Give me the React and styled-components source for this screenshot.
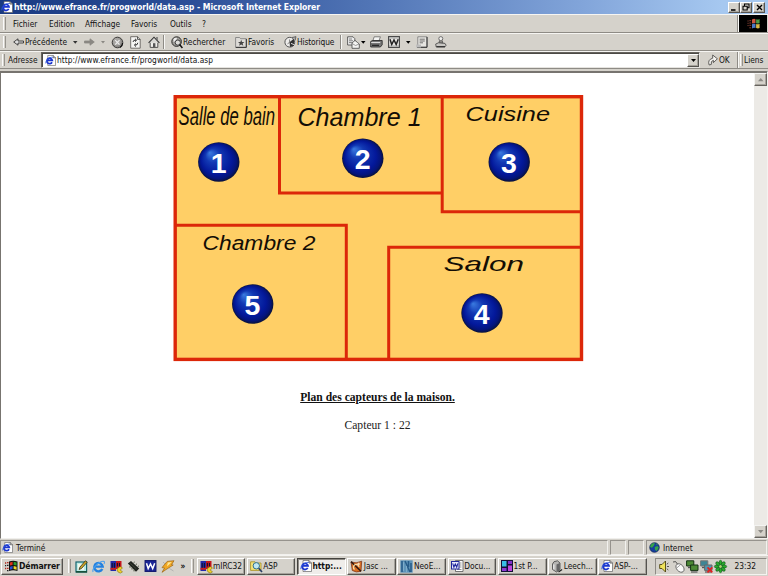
import React from 'react';
import styled, { createGlobalStyle, css } from 'styled-components';

const face = '#d5d2cb';
const uiFont = '"DejaVu Sans Condensed", "DejaVu Sans", sans-serif';

const GlobalStyle = createGlobalStyle`
  * { box-sizing: border-box; }
  body { margin: 0; overflow: hidden; background: #fff; }
`;

const Screen = styled.div`
  width: 768px;
  height: 576px;
  display: flex;
  flex-direction: column;
  background: ${face};
  font: 8.3px/12px ${uiFont};
  color: #111;
  overflow: hidden;
`;

const Cell = styled.div`
  flex: 0 0 ${(p) => p.$w}px;
  width: ${(p) => p.$w}px;
  display: flex;
  align-items: center;
`;

const Label = styled.span`
  white-space: pre;
  letter-spacing: ${(p) => p.$ls || 0}px;
  font-weight: ${(p) => (p.$bold ? 'bold' : 'normal')};
`;

const Svg = styled.svg`
  display: block;
  flex: none;
  overflow: visible;
`;

const TitleBar = styled.header`
  height: 14px;
  flex: none;
  display: flex;
  align-items: center;
  padding-left: 1px;
  background: linear-gradient(90deg, #193a82 0%, #2c4f98 25%, #5478b8 50%, #82a5da 76%, #a6c8f0 94%);
  color: #fff;
  font-size: 8.6px;
`;

const WindowButtons = styled.div`
  margin-left: auto;
  display: flex;
  padding-right: 3px;
`;

const raised = css`
  background: ${face};
  border: 1px solid;
  border-color: #fff #55534f #55534f #fff;
  box-shadow: inset -1px -1px 0 #a5a29b;
`;

const WindowButton = styled.div`
  ${raised}
  width: 12px;
  height: 11px;
  margin-left: ${(p) => p.$gap || 0}px;
  display: flex;
  align-items: center;
  justify-content: center;
`;

const Bar = styled.div`
  height: ${(p) => p.$h}px;
  flex: none;
  display: flex;
  align-items: stretch;
  border-top: 1px solid #f6f5f2;
  border-bottom: 1px solid #8e8b85;
`;

const Grip = styled.div`
  width: 3px;
  flex: none;
  align-self: stretch;
  margin: 2px ${(p) => p.$after}px 2px ${(p) => p.$before}px;
  border-left: 1px solid #fafafa;
  border-right: 1px solid #96938d;
`;

const Separator = styled.div`
  width: 2px;
  flex: none;
  margin: ${(p) => (p.$full ? '0' : '1px')} 0;
  border-left: 1px solid #8e8b85;
  border-right: 1px solid #f8f8f6;
`;

const Throbber = styled.div`
  width: 29px;
  margin: 0 1px 0 0;
  background: #000;
  display: flex;
  align-items: center;
  justify-content: center;
`;

const AddressField = styled.div`
  width: 659px;
  flex: none;
  display: flex;
  align-items: center;
  background: #fff;
  border: 1px solid;
  border-color: #66635e #e5e3df #e5e3df #66635e;
  box-shadow: inset 1px 1px 0 #4b4945;
  padding-left: 3px;
`;

const DropButton = styled.div`
  ${raised}
  margin-left: auto;
  width: 12px;
  height: 13px;
  display: flex;
  align-items: center;
  justify-content: center;
`;

const Viewport = styled.main`
  flex: 1;
  margin-top: 2px;
  display: flex;
  background: #fff;
  border: 1px solid;
  border-color: #77746f #f4f3f0 #f0efec #77746f;
  box-shadow: inset 0 1px 0 #77746f;
  padding-top: 1px;
`;

const Page = styled.div`
  flex: 1;
  display: flex;
  flex-direction: column;
  align-items: center;
  padding-top: 21px;
  font-family: "Liberation Serif", serif;
  font-size: 12px;
  line-height: 14px;
`;

const Plan = styled.figure`
  margin: 0 0 0 2px;
`;

const Caption = styled.p`
  margin: 29px 0 0;
  font-size: 11.6px;
  font-weight: bold;
  text-decoration: underline;
`;

const Reading = styled.p`
  margin: 14px 0 0;
  font-size: 11.6px;
  color: #222;
`;

const ScrollBar = styled.div`
  width: 13px;
  flex: none;
  display: flex;
  flex-direction: column;
  justify-content: space-between;
  background: #eceae6;
`;

const ScrollButton = styled.div`
  ${raised}
  height: 13px;
  border-color: #f4f4f2 #66635e #66635e #f4f4f2;
  display: flex;
  align-items: center;
  justify-content: center;
`;

const StatusBar = styled.footer`
  height: 15px;
  flex: none;
  display: flex;
  margin-top: 1px;
  gap: 2px;
  padding-right: 1px;
`;

const Pane = styled.div`
  flex: ${(p) => (p.$w ? `0 0 ${p.$w}px` : '1')};
  display: flex;
  align-items: center;
  padding-left: ${(p) => p.$pad || 0}px;
  gap: 3px;
  border: 1px solid;
  border-color: #96938d #f2f1ee #f2f1ee #96938d;
`;

const TaskBar = styled.nav`
  height: 21px;
  flex: none;
  display: flex;
  align-items: center;
  padding: 1px 1px 1px 1px;
  border-top: 1px solid #f5f4f1;
`;

const StartButton = styled.div`
  ${raised}
  width: 62px;
  height: 17px;
  flex: none;
  display: flex;
  align-items: center;
  padding-left: 3px;
  gap: 1px;
  font-size: 8.6px;
`;

const TaskButton = styled.div`
  ${raised}
  width: 48.6px;
  height: 17px;
  flex: none;
  margin-right: 1.65px;
  display: flex;
  align-items: center;
  padding-left: 2px;
  gap: 0.5px;
  overflow: hidden;
  ${(p) =>
    p.$active &&
    css`
      background: #efedea;
      border-color: #44423e #fff #fff #44423e;
      box-shadow: inset 1px 1px 0 #8e8b85;
    `}
`;

const Tray = styled.div`
  flex: 1;
  height: 17px;
  margin-left: 6px;
  display: flex;
  align-items: center;
  padding-left: 3px;
  border: 1px solid;
  border-color: #8e8b85 #f4f3f0 #f4f3f0 #8e8b85;
`;

/* ---------- icons ---------- */

const Arrow = ({ up, color = '#000', s = 5 }) => (
  <Svg width={s} height={s * 0.6} viewBox="0 0 10 6">
    <path d={up ? 'M0 6L5 0L10 6Z' : 'M0 0H10L5 6Z'} fill={color} />
  </Svg>
);

const IePage = ({ size = 12 }) => (
  <Svg width={size} height={size} viewBox="0 0 12 12">
    <path d="M3 .5H9L11.5 3V11.5H3Z" fill="#fff" stroke="#666" strokeWidth=".7" />
    <path d="M9 .5V3H11.5" fill="none" stroke="#444" strokeWidth=".8" />
    <path d="M7.7 7.9A3 3 0 1 1 8 5.9H3" fill="none" stroke="#1b36cf" strokeWidth="1.8" />
    <path d="M.7 9.2Q.2 6.5 4 3.6Q7 1.8 8.8 2.5" fill="none" stroke="#2b58dd" strokeWidth=".8" />
  </Svg>
);

const IeLogo = () => (
  <Svg width="13" height="13" viewBox="0 0 13 13">
    <path d="M10.3 9A4.2 4.2 0 1 1 10.7 6.6H3.2" fill="none" stroke="#2381df" strokeWidth="2.4" />
    <path d="M1 12Q0 9 5 4.3Q10 .2 12.2 1.5Q12.9 2.2 12 4" fill="none" stroke="#4a9fee" strokeWidth="1.1" />
  </Svg>
);

const Flag = ({ w = 13, h = 12 }) => (
  <Svg width={w} height={h} viewBox="0 0 13 12">
    <path d="M5 1.5Q7 .3 8.5 1.2V5.2Q7 4.5 5 5.5Z" fill="#c9553e" />
    <path d="M9.1 1.3Q11 2 12.6 1V5Q11 6 9.1 5.2Z" fill="#4c9a45" />
    <path d="M5 6.2Q7 5 8.5 6V10Q7 9.4 5 10.4Z" fill="#4a78c4" />
    <path d="M9.1 6.1Q11 6.7 12.6 5.8V10Q11 10.8 9.1 10Z" fill="#d9b843" />
    <path d="M.5 3H1.6M2.4 2.7H4.2M.5 5.3H1.6M2.4 5H4.2M.5 7.6H1.6M2.4 7.3H4.2M2.4 9.8H4.2" stroke="#8d4436" strokeWidth="1" />
  </Svg>
);

const StartFlag = () => (
  <Svg width="13" height="12" viewBox="0 0 13 12">
    <path d="M4 1.5Q8-.2 12.5 1.5V11Q8 9.5 4 11Z" fill="#111" />
    <path d="M5 2.5L7.6 1.8V5L5 5.5Z" fill="#e3311c" />
    <path d="M8.6 1.8L11.6 2.6V5.6L8.6 5Z" fill="#2b9c2f" />
    <path d="M5 6.7L7.6 6V9L5 9.7Z" fill="#2d50d6" />
    <path d="M8.6 6.1L11.6 6.8V9.8L8.6 9.1Z" fill="#f0d62b" />
    <path d="M0 3H1.2M2 2.7H3.5M0 8.5H1.2M2 8.3H3.5" stroke="#b3271b" strokeWidth="1.3" />
    <path d="M0 5.7H1.2M2 5.4H3.5M2 10.6H3.5" stroke="#222" strokeWidth="1.3" />
  </Svg>
);

const BackArrow = ({ forward }) => (
  <Svg width="11" height="8" viewBox="0 0 11 8">
    <path
      d={forward ? 'M.5 3H6V.8L10.3 4L6 7.2V5H.5Z' : 'M10.5 3H5V.8L.7 4L5 7.2V5H10.5Z'}
      fill={forward ? '#8a8883' : '#ddd'}
      stroke={forward ? '#8a8883' : '#222'}
      strokeWidth=".8"
    />
  </Svg>
);

const StopIcon = () => (
  <Svg width="13" height="13" viewBox="0 0 13 13">
    <circle cx="6.5" cy="6.5" r="5.3" fill="#8d8b88" stroke="#3c3b39" />
    <circle cx="5.9" cy="5.7" r="3.8" fill="#a9a7a4" />
    <path d="M4.2 4.2L8.5 8.6M8.5 4.2L4.2 8.6" stroke="#eee" strokeWidth="1.2" />
    <path d="M9 11.4A5.2 5.2 0 0 0 11.6 7" fill="none" stroke="#111" strokeWidth="1.2" />
  </Svg>
);

const RefreshIcon = () => (
  <Svg width="11" height="13" viewBox="0 0 11 13">
    <path d="M.7 .7H7.5L10.2 3.4V12.2H.7Z" fill="#f5f5f3" stroke="#55534f" strokeWidth=".8" />
    <path d="M7.5 .7V3.4H10.2" fill="none" stroke="#333" strokeWidth=".8" />
    <path d="M3 6Q3.2 3.7 6 4.2M5 2.8L6.6 4.2L5 5.6M7.8 6.8Q7.7 9.4 5 9M6 7.6L4.3 9L6 10.6" fill="none" stroke="#333" />
  </Svg>
);

const HomeIcon = () => (
  <Svg width="12" height="12" viewBox="0 0 12 12">
    <path d="M2.2 6V11.4H9.8V6" fill="#f0efec" stroke="#444" strokeWidth=".9" />
    <path d="M.6 6.8L6 1.2L11.4 6.8" fill="#d9d8d5" stroke="#333" strokeWidth="1.1" />
    <path d="M8.3 1V3.4L9.7 4.8V1Z" fill="#666" />
    <rect x="5" y="7.2" width="2.4" height="4.2" fill="#555" />
  </Svg>
);

const SearchIcon = () => (
  <Svg width="12" height="13" viewBox="0 0 12 13">
    <circle cx="5.6" cy="5.6" r="4.8" fill="#9d9b97" stroke="#2f2e2c" />
    <path d="M2.5 3Q4 1.4 6 2L5 4.6L2.6 6Z" fill="#eee" />
    <circle cx="6.8" cy="6.6" r="2.6" fill="#dddcd9" stroke="#333" strokeWidth=".9" />
    <path d="M8.6 8.6L11.4 12" stroke="#111" strokeWidth="1.5" />
  </Svg>
);

const FavIcon = () => (
  <Svg width="12" height="12" viewBox="0 0 12 12">
    <path d="M.6 1.5H4.6L5.6 2.7H11.3V11.3H.6Z" fill="#dddbd7" stroke="#777" strokeWidth=".8" />
    <path d="M11.3 3V11.4H.8" fill="none" stroke="#333" strokeWidth="1" />
    <path d="M6.2 3.8L7 6L9.4 6L7.6 7.4L8.3 9.8L6.2 8.4L4.1 9.8L4.8 7.4L3 6L5.4 6Z" fill="#444" />
  </Svg>
);

const HistoryIcon = () => (
  <Svg width="13" height="12" viewBox="0 0 13 12">
    <circle cx="5.8" cy="6.2" r="4.9" fill="#edecea" stroke="#555" />
    <path d="M5.5 6.2L10 2.4V9.8L6 11Z" fill="#333" />
    <path d="M8 1.5L12 .6L11.2 4.4" fill="#aaa" stroke="#333" strokeWidth=".6" />
    <path d="M5.6 3.4V6.4L3.5 7.8" fill="none" stroke="#666" strokeWidth=".8" />
    <path d="M7 7.4L10.5 8.8" stroke="#ddd" strokeWidth="1" />
  </Svg>
);

const EditIcon = () => (
  <Svg width="13" height="13" viewBox="0 0 13 13">
    <path d="M.6 .8H6L7.8 2.6V9H.6Z" fill="#eee" stroke="#444" strokeWidth=".8" />
    <path d="M2 3H5M2 4.8H6M2 6.6H5" stroke="#666" strokeWidth=".8" />
    <path d="M5 7L8 4.4L10.4 6.4L12.3 8V12.3H5Z" fill="#f4f4f2" stroke="#444" strokeWidth=".8" />
    <path d="M5 7.5L8.6 9.5L12 8" fill="none" stroke="#777" strokeWidth=".7" />
  </Svg>
);

const PrintIcon = () => (
  <Svg width="13" height="12" viewBox="0 0 13 12">
    <path d="M4.2 .8H10.4L8.9 5H2.8Z" fill="#f4f4f2" stroke="#555" strokeWidth=".7" />
    <path d="M.7 5.5L2.4 4.5H12.2V8.8L10.4 11H.7Z" fill="#777" stroke="#222" strokeWidth=".8" />
    <path d="M1.2 6.5H10.2" stroke="#ddd" />
    <path d="M2 9.3H9" stroke="#222" strokeWidth="1.2" />
  </Svg>
);

const WordIcon = ({ blue, w = 12 }) => (
  <Svg width={w} height="12" viewBox="0 0 12 12">
    <rect x=".6" y=".6" width="10.8" height="10.8" fill={blue ? '#1b2697' : '#e9e8e5'} stroke={blue ? '#10166d' : '#444'} strokeWidth="1.1" />
    <path d="M2 3.2L3.7 8.6L6 4L8.2 8.6L10.2 3.2" fill="none" stroke={blue ? '#fff' : '#222'} strokeWidth="1.5" />
    {!blue && <path d="M1 2H11M1 10H11" stroke="#888" strokeWidth=".7" />}
  </Svg>
);

const WordDoc = () => (
  <Svg width="13" height="12" viewBox="0 0 13 12">
    <path d="M4.5 .5H12V11.5H4.5Z" fill="#fff" stroke="#555" strokeWidth=".8" />
    <path d="M7 3H10.5M8 5H10.5M8 7H10.5M6 9.5H10.5" stroke="#777" strokeWidth=".8" />
    <rect x=".5" y="1.5" width="7.5" height="7.5" fill="#e9eafc" stroke="#22289d" />
    <path d="M1.7 3.3L2.9 7.1L4.3 4L5.7 7.1L6.9 3.3" fill="none" stroke="#22289d" strokeWidth="1.1" />
  </Svg>
);

const DiscussIcon = () => (
  <Svg width="12" height="12" viewBox="0 0 12 12">
    <path d="M1.8 .8H11V11.2H1.8Z" fill="#e6e5e1" stroke="#777" strokeWidth=".8" />
    <path d="M11 1V11.3H1" fill="none" stroke="#333" />
    <path d="M3.6 3.2H8.8M3.6 5H8.8M3.6 6.8H7" stroke="#555" strokeWidth=".8" />
    <path d="M.2 8.5H5V11.5H.2Z" fill="#bbb" />
  </Svg>
);

const MessengerIcon = () => (
  <Svg width="12" height="12" viewBox="0 0 12 12">
    <circle cx="5.8" cy="2.6" r="2" fill="#efeeec" stroke="#555" strokeWidth=".8" />
    <path d="M4.6 4.5L3.8 7.4H8L7.2 4.5" fill="#8b8985" stroke="#444" strokeWidth=".7" />
    <path d="M.7 8L3.5 6.8L10 7.4L11.2 9.5L9.5 11H1.2Z" fill="#c9c7c3" stroke="#444" strokeWidth=".8" />
    <path d="M1.5 10.7H10" stroke="#222" />
  </Svg>
);

const GoIcon = () => (
  <Svg width="10" height="12" viewBox="0 0 10 12">
    <path d="M1.2 11Q-.8 5.8 4.7 4.2V1L9.4 4.8L5.4 8.6V6.3Q2.4 7 3.3 10.4Z" fill="#f3f2ef" stroke="#3f3e3b" strokeWidth=".8" />
  </Svg>
);

const Globe = () => (
  <Svg width="11" height="11" viewBox="0 0 11 11">
    <circle cx="5.5" cy="5.5" r="4.8" fill="#163f9f" stroke="#10214d" strokeWidth=".7" />
    <path d="M2 2.4Q4.4 .8 5.8 1.2L5 3.6L3 5.8L1 5ZM5.7 5L8.4 4L9.8 5.6L7.8 9L6 8ZM7.2 1.2L9 2.7L7.5 3Z" fill="#35a44a" />
  </Svg>
);

const DesktopIcon = () => (
  <Svg width="13" height="13" viewBox="0 0 13 13">
    <rect x="1" y="2" width="10.6" height="10" fill="#bcece6" stroke="#176670" strokeWidth="1.2" />
    <path d="M3 4H9V10H3Z" fill="#f5f7ea" />
    <path d="M4 9.5L5 7L10.4 .8L12.2 2.2L6.4 8.6Z" fill="#d3a625" stroke="#28321f" strokeWidth=".8" />
    <path d="M1 11.8H12" stroke="#154e36" strokeWidth="1.5" />
  </Svg>
);

const MircIcon = () => (
  <Svg width="13" height="13" viewBox="0 0 13 13">
    <path d="M.5 1H6V11H.5Z" fill="#2229a9" />
    <path d="M6 1H11.5V9H6Z" fill="#c6161c" />
    <path d="M2.2 3V8M4.4 3V8M7.4 3V6.5M9.5 3V6.5" stroke="#16102d" strokeWidth="1.1" />
    <path d="M.5 8.8H6" stroke="#ca2022" strokeWidth="2" />
    <path d="M12.5 8A3 3 0 1 0 12.5 11.8L10.2 10Z" fill="#f2d32c" stroke="#6b5b08" strokeWidth=".5" />
  </Svg>
);

const ChipIcon = () => (
  <Svg width="13" height="13" viewBox="0 0 13 13">
    <path d="M.8 3.6L4 1L12.2 8.4L9 11.7Z" fill="#1e211c" />
    <path d="M3 6V7.8M5 7.8V9.6M7 9.6V11.4M6.6 2.4L7.8 2M8.8 4.4L10 4M10.8 6.4L12 6" stroke="#58604d" strokeWidth="1" />
    <path d="M3.3 3.3L9.5 9" stroke="#4a5140" strokeWidth=".7" />
  </Svg>
);

const WinampIcon = () => (
  <Svg width="14" height="13" viewBox="0 0 14 13">
    <path d="M6.2 1.4L13 .7L10.5 4.7L12.2 5L5 9.6L1 12.3L3.6 8L1 7.6Z" fill="#f1a824" stroke="#9b6311" strokeWidth=".7" />
    <path d="M6.8 2.5L10.8 2L6 6.5Z" fill="#ffe995" />
    <path d="M8.5 8.5L12.5 11M2 2L4 4" stroke="#aaa" strokeWidth=".8" />
  </Svg>
);

const AspIcon = () => (
  <Svg width="13" height="13" viewBox="0 0 13 13">
    <path d="M.6 1.8H5L6 3H11V10.4H.6Z" fill="#f7e477" stroke="#a58b20" strokeWidth=".8" />
    <circle cx="6.3" cy="5.8" r="3.2" fill="#bfe7f3" stroke="#2e6e8c" />
    <path d="M8.7 8.2L12 12" stroke="#2b3d66" strokeWidth="1.7" />
  </Svg>
);

const JascIcon = () => (
  <Svg width="13" height="13" viewBox="0 0 13 13">
    <path d="M1 2Q6 4 11.7 1.2L11 11.3Q6 13 2.3 10.5Z" fill="#d96f22" stroke="#742a0e" strokeWidth=".7" />
    <path d="M1 1.6L11 11.2" stroke="#301a12" strokeWidth="1.5" />
    <path d="M4.5 9.4A2.8 2.8 0 1 1 9 6.8" fill="none" stroke="#f6dba6" strokeWidth="1.3" />
    <circle cx="8.6" cy="4" r="1.2" fill="#f8d9b5" />
  </Svg>
);

const NeoIcon = () => (
  <Svg width="13" height="13" viewBox="0 0 13 13">
    <rect x=".3" y=".3" width="12.4" height="12.4" fill="#5e93b8" />
    <path d="M2 1V12M5 1L10 12M8.5 1V7M11 3V12" stroke="#275b88" strokeWidth="1.5" />
    <path d="M3.5 2V11M6.5 6V12" stroke="#86b2cd" strokeWidth=".8" />
  </Svg>
);

const FirstPageIcon = () => (
  <Svg width="12" height="12" viewBox="0 0 12 12">
    <rect width="12" height="12" fill="#141036" />
    <path d="M1 1H5.5V6.5H1Z" fill="#39bfe6" />
    <path d="M7 1H11V4H7Z" fill="#8130c9" />
    <path d="M1 8H5.5V11H1Z" fill="#8d39d5" />
    <path d="M7 5.5H11V11H7Z" fill="#c045dd" />
  </Svg>
);

const LeechIcon = () => (
  <Svg width="12" height="13" viewBox="0 0 11 13">
    <path d="M1 4Q1.5 1 6 .8L8.5 3V9.5L5 12L1 9.5Z" fill="#b6b5b2" stroke="#444" strokeWidth=".8" />
    <path d="M5 4.5L8.3 3V9.5L5 11.8Z" fill="#666" />
    <path d="M2.3 4.5V9.2" stroke="#eee" strokeWidth="1.2" />
    <path d="M7 12L10.6 9.5" stroke="#222" strokeWidth="1.2" />
  </Svg>
);

const SpeakerIcon = () => (
  <Svg width="11" height="13" viewBox="0 0 11 13">
    <path d="M.7 4.5H3L6.5 1V12L3 8.5H.7Z" fill="#efe25a" stroke="#4b430d" strokeWidth=".9" />
    <path d="M7.8 4.3L9.3 3M8 6.5H10M7.8 8.7L9.3 10" stroke="#333" strokeWidth=".8" />
  </Svg>
);

const MouseIcon = () => (
  <Svg width="13" height="13" viewBox="0 0 13 13">
    <path d="M1 2Q4 .2 5.4 4" fill="none" stroke="#333" strokeWidth=".8" />
    <ellipse cx="8" cy="8" rx="3.4" ry="4.8" transform="rotate(-42 8 8)" fill="#fbfbfa" stroke="#555" strokeWidth=".8" />
    <path d="M5 7.8L8.2 5" stroke="#777" strokeWidth=".7" />
  </Svg>
);

const NetworkIcon = ({ off }) => (
  <Svg width="13" height="13" viewBox="0 0 13 13">
    <path d="M.6 .8H7.8V6H.6Z" fill={off ? '#3e8595' : '#4d8a36'} stroke={off ? '#777' : '#163314'} strokeWidth="1" />
    <path d="M2 7.5H6" stroke="#555" strokeWidth="1.4" />
    <path d="M4.6 5H12V10.4H4.6Z" fill={off ? '#5097b2' : '#4d8a36'} stroke={off ? '#666' : '#163314'} strokeWidth="1" />
    <path d="M5 12H11.5" stroke="#555" strokeWidth="1.2" />
    {off && <path d="M7.5 7.3L12.3 12.4M12.3 7.3L7.5 12.4" stroke="#e32020" strokeWidth="1.8" />}
  </Svg>
);

const FlowerIcon = () => (
  <Svg width="13" height="13" viewBox="0 0 13 13">
    <g fill="#28ad2d" stroke="#104f16" strokeWidth=".6">
      {[0, 45, 90, 135, 180, 225, 270, 315].map((a) => (
        <ellipse key={a} cx="6.5" cy="2.7" rx="1.5" ry="2.4" transform={`rotate(${a} 6.5 6.5)`} />
      ))}
    </g>
    <circle cx="6.5" cy="6.5" r="1" fill="#b8e05a" />
  </Svg>
);

/* ---------- floor plan ---------- */

const RoomName = styled.text`
  font-family: "Liberation Sans", sans-serif;
  font-style: italic;
  fill: #130d05;
`;

const SensorNumber = styled.text`
  font: bold 28.5px "Liberation Sans", sans-serif;
  fill: #fff;
  text-anchor: middle;
`;

const rooms = [
  { name: 'Salle de bain', x: 178.5, y: 125, stretch: 0.668, size: 25 },
  { name: 'Chambre 1', x: 297.5, y: 125.5, stretch: 0.947, size: 26.5 },
  { name: 'Cuisine', x: 465.5, y: 120.5, stretch: 1.237, size: 20.5 },
  { name: 'Chambre 2', x: 202.5, y: 250.3, stretch: 1.114, size: 20.5 },
  { name: 'Salon', x: 443.5, y: 271.3, stretch: 1.536, size: 20.5 },
];

const sensors = [
  { id: 1, x: 218.8, y: 162 },
  { id: 2, x: 362.8, y: 158.3 },
  { id: 3, x: 509.2, y: 162 },
  { id: 4, x: 482, y: 313 },
  { id: 5, x: 252.7, y: 304 },
];

const FloorPlan = () => (
  <Svg width="411" height="268" viewBox="173 94 411 268">
    <defs>
      <radialGradient id="ball" cx=".5" cy=".5" r=".5" fx=".28" fy=".26">
        <stop offset="0" stopColor="#3a7be0" />
        <stop offset=".35" stopColor="#1239b4" />
        <stop offset=".75" stopColor="#03189a" />
        <stop offset=".9" stopColor="#04147a" />
        <stop offset="1" stopColor="#0a1238" />
      </radialGradient>
    </defs>
    <g fill="#ffcf66" stroke="#dc2709" strokeWidth="3">
      <rect x="175.2" y="96.7" width="406.3" height="262.7" strokeWidth="3.4" />
      <path d="M279.5 97V193H442M442.2 97V211.7H581M175 225.3H346.3V359M388.7 359V247.2H581" fill="none" />
    </g>
    {rooms.map((r) => (
      <RoomName key={r.name} fontSize={r.size} transform={`translate(${r.x} ${r.y}) scale(${r.stretch} 1)`}>
        {r.name}
      </RoomName>
    ))}
    {sensors.map((s) => (
      <g key={s.id}>
        <ellipse cx={s.x} cy={s.y} rx="20.7" ry="19.7" fill="url(#ball)" />
        <SensorNumber x={s.x - 0.2} y={s.y + 10.6}>{s.id}</SensorNumber>
      </g>
    ))}
  </Svg>
);

const menus = [
  ['Fichier', 36],
  ['Edition', 36],
  ['Affichage', 46],
  ['Favoris', 39],
  ['Outils', 32],
  ['?', 20],
];

const launchers = [
  [DesktopIcon, 17],
  [IeLogo, 17.5],
  [MircIcon, 17],
  [ChipIcon, 17],
  [() => <WordIcon blue w={13} />, 17],
  [WinampIcon, 20],
];

const tasks = [
  ['mIRC32', MircIcon],
  ['ASP', AspIcon],
  ['http:...', IePage, true],
  ['Jasc ...', JascIcon],
  ['NeoE...', NeoIcon],
  ['Docu...', WordDoc],
  ['1st P...', FirstPageIcon],
  ['Leech...', LeechIcon],
  ['ASP-...', IePage],
];

const trayIcons = [
  [SpeakerIcon, 13],
  [MouseIcon, 14],
  [NetworkIcon, 14],
  [() => <NetworkIcon off />, 14],
  [FlowerIcon, 21],
];

export default function App() {
  return (
    <Screen>
      <GlobalStyle />
      <TitleBar>
        <Cell $w={13}><IePage size={12} /></Cell>
        <Label $bold $ls={-0.05}>http://www.efrance.fr/progworld/data.asp - Microsoft Internet Explorer</Label>
        <WindowButtons>
          <WindowButton>
            <Svg width="8" height="7" viewBox="0 0 8 7"><path d="M1 6H5.5" stroke="#000" strokeWidth="1.6" /></Svg>
          </WindowButton>
          <WindowButton>
            <Svg width="8" height="8" viewBox="0 0 8 8">
              <path d="M2.5 3V1H7V4.7H5.5M1 3.3H5.2V7H1Z" fill="none" stroke="#000" strokeWidth="1.1" />
            </Svg>
          </WindowButton>
          <WindowButton $gap={1.5}>
            <Svg width="7" height="7" viewBox="0 0 7 7"><path d="M1 1L6 6M6 1L1 6" stroke="#000" strokeWidth="1.4" /></Svg>
          </WindowButton>
        </WindowButtons>
      </TitleBar>

      <Bar $h={19}>
        <Grip $before={3} $after={7} />
        {menus.map(([name, w]) => (
          <Cell key={name} $w={w}><Label>{name}</Label></Cell>
        ))}
        <Cell $w={515} />
        <Separator $full />
        <Throbber><Flag /></Throbber>
      </Bar>

      <Bar $h={18}>
        <Grip $before={3} $after={7} />
        <Cell $w={12}><BackArrow /></Cell>
        <Cell $w={48}><Label>Précédente</Label></Cell>
        <Cell $w={11}><Arrow color="#333" s={4.5} /></Cell>
        <Cell $w={17}><BackArrow forward /></Cell>
        <Cell $w={10}><Arrow color="#8a8883" s={4} /></Cell>
        <Cell $w={19}><StopIcon /></Cell>
        <Cell $w={18}><RefreshIcon /></Cell>
        <Cell $w={15}><HomeIcon /></Cell>
        <Separator />
        <Cell $w={6} />
        <Cell $w={12}><SearchIcon /></Cell>
        <Cell $w={52}><Label>Rechercher</Label></Cell>
        <Cell $w={13}><FavIcon /></Cell>
        <Cell $w={36}><Label>Favoris</Label></Cell>
        <Cell $w={13}><HistoryIcon /></Cell>
        <Cell $w={43}><Label $ls={-0.1}>Historique</Label></Cell>
        <Separator />
        <Cell $w={5} />
        <Cell $w={14}><EditIcon /></Cell>
        <Cell $w={9}><Arrow s={4.5} /></Cell>
        <Cell $w={18}><PrintIcon /></Cell>
        <Cell $w={18}><WordIcon /></Cell>
        <Cell $w={10}><Arrow s={4.5} /></Cell>
        <Cell $w={19}><DiscussIcon /></Cell>
        <Cell $w={14}><MessengerIcon /></Cell>
      </Bar>

      <Bar $h={18}>
        <Grip $before={2} $after={3} />
        <Cell $w={33}><Label>Adresse</Label></Cell>
        <AddressField>
          <Cell $w={12}><IePage size={11} /></Cell>
          <Label $ls={0.05}>http://www.efrance.fr/progworld/data.asp</Label>
          <DropButton><Arrow s={5} /></DropButton>
        </AddressField>
        <Cell $w={8} />
        <Cell $w={11}><GoIcon /></Cell>
        <Cell $w={18}><Label>OK</Label></Cell>
        <Separator $full />
        <Grip $before={1} $after={1} />
        <Cell $w={24}><Label>Liens</Label></Cell>
      </Bar>

      <Viewport>
        <Page>
          <Plan><FloorPlan /></Plan>
          <Caption>Plan des capteurs de la maison.</Caption>
          <Reading>Capteur 1 : 22</Reading>
        </Page>
        <ScrollBar>
          <ScrollButton><Arrow up color="#8a8883" s={5.5} /></ScrollButton>
          <ScrollButton><Arrow color="#8a8883" s={5.5} /></ScrollButton>
        </ScrollBar>
      </Viewport>

      <StatusBar>
        <Pane $pad={1}><IePage size={11} /><Label>Terminé</Label></Pane>
        <Pane $w={16} />
        <Pane $w={16} />
        <Pane $w={121} $pad={2}><Globe /><Label>Internet</Label></Pane>
      </StatusBar>

      <TaskBar>
        <StartButton><StartFlag /><Label $bold $ls={-0.1}>Démarrer</Label></StartButton>
        <Separator $full />
        <Grip $before={3} $after={4} />
        {launchers.map(([Icon, w], i) => (
          <Cell key={i} $w={w}><Icon /></Cell>
        ))}
        <Cell $w={9}><Label $bold>»</Label></Cell>
        <Grip $before={1} $after={3} />
        {tasks.map(([name, Icon, active]) => (
          <TaskButton key={name} $active={active}><Icon /><Label $bold={active}>{name}</Label></TaskButton>
        ))}
        <Tray>
          {trayIcons.map(([Icon, w], i) => (
            <Cell key={i} $w={w}><Icon /></Cell>
          ))}
          <Label>23:32</Label>
        </Tray>
      </TaskBar>
    </Screen>
  );
}
